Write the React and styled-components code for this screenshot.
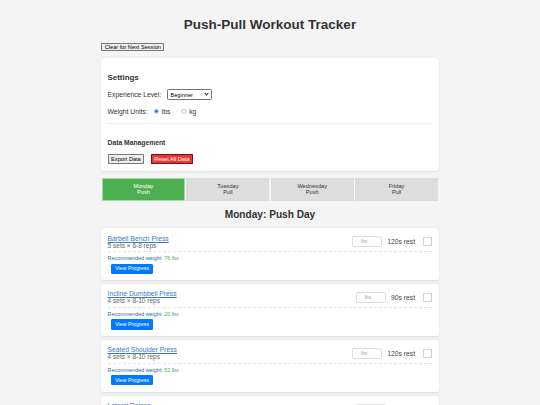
import React, { useState } from "react";
import styled, { createGlobalStyle } from "styled-components";

const GlobalStyle = createGlobalStyle`
  html { zoom: 0.421875; }
  body {
    margin: 0;
    background: #f4f4f4;
    font-family: "Liberation Sans", Arial, sans-serif;
    color: #333;
  }
  button, input, select { font-family: "Liberation Sans", Arial, sans-serif; }
`;

const Page = styled.div`
  max-width: 800px;
  margin: 0 auto;
  padding: 20px 0;
`;

const Title = styled.h1`
  font-size: 32px;
  font-weight: bold;
  text-align: center;
  color: #333;
  margin: 19.6px 0 26px;
`;

const NativeButton = styled.button`
  font-size: 13.33px;
  line-height: 15.3px;
  padding: 2px 6px;
  background: #efefef;
  color: #000;
  border: 1px solid #767676;
  border-radius: 2px;
  cursor: pointer;
`;

const ClearButton = styled(NativeButton)`
  display: block;
  padding: 0 6px;
  margin-bottom: 17px;
`;

const DangerButton = styled(NativeButton)`
  background: #e53935;
  color: #fff;
  border: 2px solid #7a1010;
  padding: 1px 6px;
`;

const Card = styled.div`
  background: #fff;
  border-radius: 8px;
  box-shadow: 0 2px 5px rgba(0, 0, 0, 0.1);
  padding: 15px;
  margin-bottom: ${(p) => p.$mb || "10px"};
`;

const SectionTitle = styled.h3`
  font-size: 18.72px;
  font-weight: bold;
  margin: 18.7px 0;
`;

const SubTitle = styled.h4`
  font-size: 16px;
  font-weight: bold;
  margin: 35px 0 19.8px;
`;

const SettingRow = styled.div`
  display: flex;
  align-items: center;
  font-size: 16px;
  min-height: ${(p) => p.$h || "18.4px"};
  margin-top: ${(p) => p.$mt || "0"};
`;

const RowLabel = styled.span`
  margin-right: ${(p) => p.$mr || "14.5px"};
`;

const SelectWrap = styled.span`
  position: relative;
  display: inline-flex;
  &::after {
    content: "";
    position: absolute;
    right: 9px;
    top: 7px;
    width: 5px;
    height: 5px;
    border-right: 2px solid #222;
    border-bottom: 2px solid #222;
    transform: rotate(45deg);
    pointer-events: none;
  }
`;

const Select = styled.select`
  appearance: none;
  -webkit-appearance: none;
  font-size: 13.33px;
  width: 106.7px;
  height: 24.5px;
  padding: 0 20px 0 5px;
  border: 1px solid #767676;
  border-radius: 3px;
  background: #fff;
  color: #000;
`;

const RadioOption = styled.label`
  display: flex;
  align-items: center;
  margin-right: 15.5px;
  input {
    margin: 0 6px 0 10px;
    width: 13px;
    height: 13px;
  }
`;

const Divider = styled.hr`
  border: none;
  border-top: 1px solid #eee;
  margin: 18.6px 0 0;
`;

const ButtonRow = styled.div`
  display: flex;
  gap: 15px;
`;

const Tabs = styled.div`
  display: flex;
  gap: 4px;
  padding: 0 2px;
  margin-top: 18px;
`;

const Tab = styled.button`
  flex: 1;
  font-size: 13.33px;
  line-height: 15.3px;
  padding: 9px 5px;
  border: 1px solid ${(p) => (p.$active ? "#a5d6a7" : "#ddd")};
  background: ${(p) => (p.$active ? "#4caf50" : "#ddd")};
  color: ${(p) => (p.$active ? "#fff" : "#333")};
  cursor: pointer;
`;

const DayTitle = styled.h2`
  font-size: 24px;
  font-weight: bold;
  text-align: center;
  margin: 19px 0 20px;
`;

const TopRow = styled.div`
  display: flex;
  justify-content: space-between;
  align-items: center;
  padding-bottom: 6px;
  border-bottom: 1px dashed #e2e2e2;
`;

const Info = styled.div`
  display: flex;
  flex-direction: column;
`;

const ExName = styled.a`
  font-size: 16px;
  color: #3a78c9;
  text-decoration: underline;
  cursor: pointer;
`;

const ExDetails = styled.span`
  font-size: 15.5px;
  color: #666;
`;

const Controls = styled.div`
  display: flex;
  align-items: center;
  gap: 12px;
`;

const WeightInput = styled.input`
  width: 71px;
  height: 25px;
  box-sizing: border-box;
  border: 1px solid #ddd;
  border-radius: 4px;
  text-align: center;
  font-size: 12px;
  &::placeholder { color: #aaa; }
`;

const Rest = styled.span`
  font-size: 16px;
  color: #444;
`;

const Check = styled.input`
  width: 20px;
  height: 20px;
  margin: 0 2px 0 7px;
`;

const Recommend = styled.div`
  margin-top: 8px;
  font-size: 12.8px;
  color: #2e6da4;
  span { color: #4caf50; }
`;

const ProgressButton = styled.button`
  display: block;
  margin: 5px 0 0 8px;
  font-size: 12.5px;
  line-height: 13.8px;
  padding: 5px 10px;
  background: #007bff;
  color: #fff;
  border: none;
  border-radius: 3px;
  cursor: pointer;
`;

const days = [
  { day: "Monday", type: "Push" },
  { day: "Tuesday", type: "Pull" },
  { day: "Wednesday", type: "Push" },
  { day: "Friday", type: "Pull" },
];

const exercises = [
  { name: "Barbell Bench Press", sets: 5, reps: "6-8", rest: 120, rec: 76 },
  { name: "Incline Dumbbell Press", sets: 4, reps: "8-10", rest: 90, rec: 20 },
  { name: "Seated Shoulder Press", sets: 4, reps: "8-10", rest: 120, rec: 52 },
  { name: "Lateral Raises", sets: 3, reps: "12-15", rest: 60, rec: 10 },
  { name: "Tricep Pushdowns", sets: 3, reps: "10-12", rest: 60, rec: 30 },
];

function ExerciseCard({ ex }) {
  return (
    <Card>
      <TopRow>
        <Info>
          <ExName>{ex.name}</ExName>
          <ExDetails>
            {ex.sets} sets × {ex.reps} reps
          </ExDetails>
        </Info>
        <Controls>
          <WeightInput type="number" placeholder="lbs" />
          <Rest>{ex.rest}s rest</Rest>
          <Check type="checkbox" />
        </Controls>
      </TopRow>
      <Recommend>
        Recommended weight: <span>{ex.rec} lbs</span>
      </Recommend>
      <ProgressButton>View Progress</ProgressButton>
    </Card>
  );
}

export default function App() {
  const [active, setActive] = useState(0);
  const [units, setUnits] = useState("lbs");
  return (
    <>
      <GlobalStyle />
      <Page>
        <Title>Push-Pull Workout Tracker</Title>
        <ClearButton>Clear for Next Session</ClearButton>
        <Card $mb="0">
          <SectionTitle>Settings</SectionTitle>
          <SettingRow $h="24.5px">
            <RowLabel>Experience Level:</RowLabel>
            <SelectWrap>
              <Select defaultValue="beginner">
                <option value="beginner">Beginner</option>
                <option value="intermediate">Intermediate</option>
                <option value="advanced">Advanced</option>
              </Select>
            </SelectWrap>
          </SettingRow>
          <SettingRow $mt="18.4px">
            <RowLabel $mr="4.5px">Weight Units:</RowLabel>
            <RadioOption>
              <input
                type="radio"
                name="units"
                checked={units === "lbs"}
                onChange={() => setUnits("lbs")}
              />
              lbs
            </RadioOption>
            <RadioOption>
              <input
                type="radio"
                name="units"
                checked={units === "kg"}
                onChange={() => setUnits("kg")}
              />
              kg
            </RadioOption>
          </SettingRow>
          <Divider />
          <SubTitle>Data Management</SubTitle>
          <ButtonRow>
            <NativeButton>Export Data</NativeButton>
            <DangerButton>Reset All Data</DangerButton>
          </ButtonRow>
        </Card>
        <Tabs>
          {days.map((d, i) => (
            <Tab key={d.day} $active={i === active} onClick={() => setActive(i)}>
              {d.day}
              <br />
              {d.type}
            </Tab>
          ))}
        </Tabs>
        <DayTitle>
          {days[active].day}: {days[active].type} Day
        </DayTitle>
        {exercises.map((ex) => (
          <ExerciseCard key={ex.name} ex={ex} />
        ))}
      </Page>
    </>
  );
}
